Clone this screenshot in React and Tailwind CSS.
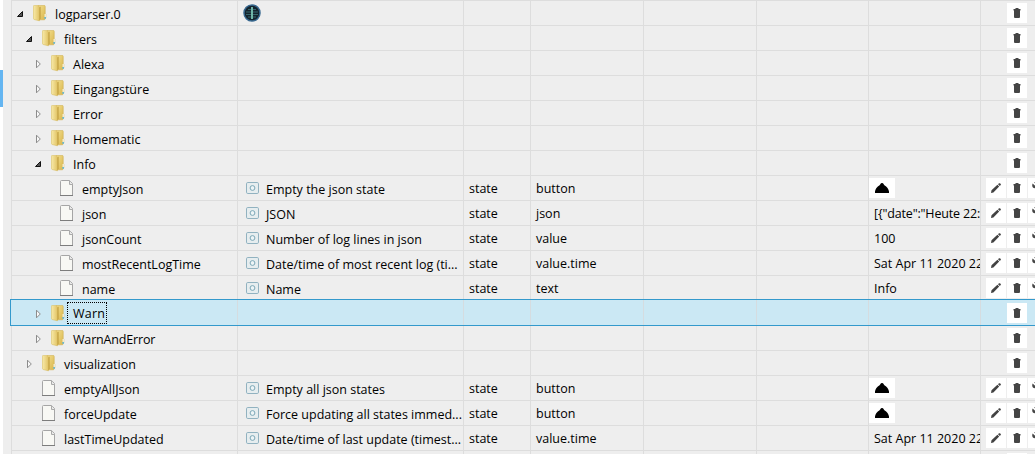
import React from "react";

const rows = [
  { n: "logparser.0", l: 0, open: true, logo: true },
  { n: "filters", l: 1, open: true },
  { n: "Alexa", l: 2 },
  { n: "Eingangstüre", l: 2 },
  { n: "Error", l: 2 },
  { n: "Homematic", l: 2 },
  { n: "Info", l: 2, open: true },
  { n: "emptyJson", l: 3, d: "Empty the json state", r: "button", bell: true },
  { n: "json", l: 3, d: "JSON", r: "json", v: '[{"date":"Heute 22:', tight: true },
  { n: "jsonCount", l: 3, d: "Number of log lines in json", r: "value", v: "100" },
  { n: "mostRecentLogTime", l: 3, d: "Date/time of most recent log (ti...", r: "value.time", v: "Sat Apr 11 2020 22:" },
  { n: "name", l: 3, d: "Name", r: "text", v: "Info" },
  { n: "Warn", l: 2, sel: true },
  { n: "WarnAndError", l: 2 },
  { n: "visualization", l: 1 },
  { n: "emptyAllJson", l: 1, d: "Empty all json states", r: "button", bell: true },
  { n: "forceUpdate", l: 1, d: "Force updating all states immed...", r: "button", bell: true },
  { n: "lastTimeUpdated", l: 1, d: "Date/time of last update (timest...", r: "value.time", v: "Sat Apr 11 2020 22:" },
];

const indents = ["pl-[4px]", "pl-[13px]", "pl-[22px]", "pl-[31px]"];

function Expander({ open }) {
  return open ? (
    <svg width="8" height="8" viewBox="0 0 8 8" className="mt-[9px] shrink-0">
      <path d="M6.5 1.5V6.5H1.5Z" fill="#555" stroke="#111" strokeWidth="1" />
    </svg>
  ) : (
    <svg width="8" height="10" viewBox="0 0 8 10" className="mt-[8px] shrink-0">
      <path d="M2.5 1.2V8.8L6.3 5Z" fill="#f8f8f8" stroke="#8c8c8c" strokeWidth="1" />
    </svg>
  );
}

function Folder() {
  return (
    <svg width="14" height="17" viewBox="0 0 14 17" className="mt-[4px] ml-[9px] shrink-0">
      <defs>
        <linearGradient id="back" x1="0" x2="1" y2="1">
          <stop offset="0" stopColor="#f3df8c" />
          <stop offset="1" stopColor="#d8b44c" />
        </linearGradient>
        <linearGradient id="front" x1="0" x2="1">
          <stop offset="0" stopColor="#f8eaa9" />
          <stop offset="1" stopColor="#e2c466" />
        </linearGradient>
      </defs>
      <path d="M5 .4H11.2Q12.2 .4 12.2 1.4V8.5L12.8 9.5V13L11.5 14.8H5Z" fill="url(#back)" stroke="#d0b04f" strokeWidth=".6" />
      <path d="M.4 1.3Q.4.4 1.2.4H4.8L6.4 1.8V15.8L1.2 14.5Q.4 14.2.4 13.6Z" fill="url(#front)" stroke="#d8bd62" strokeWidth=".6" />
      <path d="M6.4 2.4L7.6 1.4V13.8L6.4 15.6Z" fill="#c29e40" />
      <path d="M11.6 9H12.8V12H11.6Z" fill="#f9f7ea" />
      <path d="M11.4 12H12.9V13.8H11.4Z" fill="#59b9e6" />
    </svg>
  );
}

function File() {
  return (
    <svg width="14" height="17" viewBox="0 0 14 17" className="mt-[4px] ml-[9px] shrink-0">
      <path d="M.5 1.5Q.5.5 1.5.5H9.5L12.5 3.5V15.5H.5Z" fill="#f8f8f4" stroke="#a5a5a5" />
      <path d="M9.5.5V4.5H12.5" fill="#e8e8e8" stroke="#aaa" />
      <path d="M0 15.5H13" stroke="#7d7d7d" />
    </svg>
  );
}

function Logo() {
  return (
    <svg width="18" height="18" viewBox="0 0 18 18" className="mt-[3px] ml-[5px]">
      <circle cx="9" cy="9" r="8" fill="#15242e" stroke="#37688f" strokeWidth="1.5" />
      <path d="M5 5.5H13M3 8H15M3 10.5H15M5 13H13" stroke="#3b6f74" strokeWidth=".9" />
      <path d="M9 3V15" stroke="#6fb5a6" strokeWidth="2" />
    </svg>
  );
}

function StateIcon() {
  return (
    <svg width="13" height="12" viewBox="0 0 13 12" className="mt-[6px] ml-[8px] shrink-0">
      <rect x=".5" y=".5" width="12" height="11" rx="1.3" fill="#e6edef" stroke="#91b2c0" />
      <circle cx="6.5" cy="6" r="2.4" fill="#edf4f6" stroke="#7ba7b7" />
    </svg>
  );
}

function Bell() {
  return (
    <div className="mt-[2px] flex h-5 w-[26px] shrink-0 bg-white">
      <svg width="26" height="20" viewBox="0 0 26 20">
        <path d="M6 15V13.6C6.3 11 8 8.6 10.6 7.2L12 5.2Q13 4.6 14 5.2L15.4 7.2C18 8.6 19.6 11 20 13.6V15Z" fill="#000" />
      </svg>
    </div>
  );
}

function Pencil() {
  return (
    <svg width="20" height="20" viewBox="0 0 20 20">
      <path d="M5 15L5.5 12.3L11.4 6.8L13.2 8.6L7.4 14.4ZM12 6.3L13 5.3Q13.7 4.9 14.3 5.5L14.7 5.9Q15.2 6.5 14.7 7.1L13.8 8Z" fill="#424242" />
    </svg>
  );
}

function Trash() {
  return (
    <svg width="20" height="20" viewBox="0 0 20 20">
      <path d="M6.5 6H8.5V5H11.5V6H13.5V7.5H6.5ZM7 7.2H13V14Q13 15 12 15H8Q7 15 7 14Z" fill="#454545" />
    </svg>
  );
}

function Wrench() {
  return (
    <svg width="20" height="20" viewBox="0 0 20 20">
      <path d="M4.6 5.4L6.8 7.6L8.2 6.2L6 4.4Q9.5 3.6 10.4 6.6L10 8.5L15 13.5L13.5 15L8.4 10.2Q4 11 4.2 7Z" fill="#454545" />
    </svg>
  );
}

function Row({ row }) {
  const cell = "h-full shrink-0 overflow-hidden border-r";
  const border = row.sel ? "border-[#d5dce0]" : "border-[#dddddd]";
  const text = "pt-[3px] pl-[5px] leading-[19px]";
  return (
    <div
      className={
        row.sel
          ? "relative -mt-px -ml-px flex h-[27px] w-[1030px] shrink-0 border border-[#3399cc] bg-[#cbe8f4]"
          : "flex h-[25px] border-t border-l border-[#dddddd]"
      }
    >
      <div className={`${cell} ${border} flex ${row.sel ? "w-[227px] pt-px pl-[23px]" : `w-[226px] ${indents[row.l]}`}`}>
        {row.d ? <div className="w-2 shrink-0" /> : <Expander open={row.open} />}
        {row.d ? <File /> : <Folder />}
        <div
          className={
            row.sel
              ? "mt-px ml-[2px] h-[22px] w-[40px] border border-dotted border-black pl-[5px] tracking-[0.2px] leading-[22px]"
              : row.n === "WarnAndError"
                ? "mt-[4px] ml-[8px] tracking-[-0.17px] leading-[19px]"
                : "mt-[4px] ml-[8px] leading-[19px]"
          }
        >
          {row.n}
        </div>
      </div>
      <div className={`${cell} ${border} flex w-[226px]`}>
        {row.logo && <Logo />}
        {row.d && <StateIcon />}
        {row.d && <div className="mt-[4px] ml-[7px] leading-[19px]">{row.d}</div>}
      </div>
      <div className={`${cell} ${border} w-[67px] ${text}`}>{row.d && "state"}</div>
      <div className={`${cell} ${border} w-[113px] ${text}`}>{row.r}</div>
      <div className={`${cell} ${border} w-[113px]`} />
      <div className={`${cell} ${border} w-[112px]`} />
      <div className={`${cell} ${border} w-[112px]`}>
        {row.bell ? <Bell /> : <div className={`${text} ${row.tight ? "tracking-[-0.17px]" : ""}`}>{row.v}</div>}
      </div>
      <div className={`flex shrink-0 gap-px pl-[5px] ${row.sel ? "pt-[3px]" : "pt-[2px]"}`}>
        <div className={row.d ? "h-5 w-5 bg-white" : "h-5 w-5"}>{row.d && <Pencil />}</div>
        <div className="h-5 w-5 bg-white"><Trash /></div>
        {row.d && <div className="h-5 w-5 bg-white"><Wrench /></div>}
      </div>
    </div>
  );
}

export default function App() {
  return (
    <div className="flex h-[454px] w-[1035px] overflow-hidden bg-[#eeeeee] font-['Open_Sans','Noto_Sans',sans-serif] text-[12.5px] whitespace-nowrap text-black">
      <div className="w-[3px] shrink-0 bg-white pt-[70px]">
        <div className="h-[37px] bg-[#64b5f1]" />
      </div>
      <div className="ml-2 w-[1024px] shrink-0">
        {rows.map((row) => (
          <div key={row.n} className="flex h-[25px] flex-col">
            <Row row={row} />
          </div>
        ))}
        <div className="flex h-1 border-t border-l border-[#dddddd]">
          <div className="w-[226px] shrink-0 border-r border-[#dddddd]" />
          <div className="w-[226px] shrink-0 border-r border-[#dddddd]" />
          <div className="w-[67px] shrink-0 border-r border-[#dddddd]" />
          <div className="w-[113px] shrink-0 border-r border-[#dddddd]" />
          <div className="w-[113px] shrink-0 border-r border-[#dddddd]" />
          <div className="w-[112px] shrink-0 border-r border-[#dddddd]" />
          <div className="w-[112px] shrink-0 border-r border-[#dddddd]" />
          <div className="mt-[2px] ml-[26px] h-5 w-5 bg-white" />
        </div>
      </div>
    </div>
  );
}
